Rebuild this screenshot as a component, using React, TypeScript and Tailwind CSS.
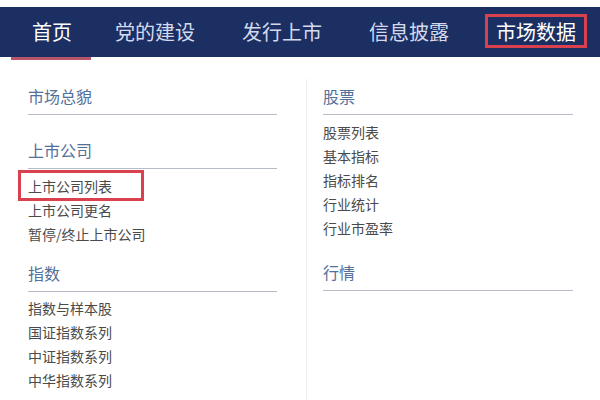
import React from "react";

const navItems = [
  { label: "首页", active: true },
  { label: "党的建设" },
  { label: "发行上市" },
  { label: "信息披露" },
  { label: "市场数据", boxed: true },
];

type Section = { title: string; items: string[]; gap: string; listTop?: string };

const leftSections: Section[] = [
  { title: "市场总貌", items: [], gap: "mb-[23px]" },
  { title: "上市公司", items: ["上市公司列表", "上市公司更名", "暂停/终止上市公司"], gap: "mb-[15px]" },
  {
    title: "指数",
    items: ["指数与样本股", "国证指数系列", "中证指数系列", "中华指数系列"],
    gap: "mb-[16px]",
    listTop: "mt-[4px]",
  },
];

const rightSections: Section[] = [
  { title: "股票", items: ["股票列表", "基本指标", "指标排名", "行业统计", "行业市盈率"], gap: "mb-[20px]" },
  { title: "行情", items: [], gap: "mb-[24px]" },
];

function MenuSection({ section }: { section: Section }) {
  return (
    <div className={section.gap}>
      <div className="text-[16px] leading-[24px] text-[#52709a] pb-[6px] border-b border-[#b5bcc8]">
        {section.title}
      </div>
      {section.items.length > 0 && (
        <ul className={section.listTop ?? "mt-[5px]"}>
          {section.items.map((item) => (
            <li key={item} className="text-[14px] leading-[24px] text-[#4a4a4a]">
              {item === "上市公司列表" ? (
                <span className="relative">
                  {item}
                  <span className="absolute left-[-10px] right-[-32px] top-[-6px] bottom-[-5px] border-[3px] border-[#d9414f]" />
                </span>
              ) : (
                item
              )}
            </li>
          ))}
        </ul>
      )}
    </div>
  );
}

export default function App() {
  return (
    <div
      className="w-[600px] h-[400px] bg-white overflow-hidden"
      style={{ fontFamily: '"Noto Sans CJK SC", "Noto Sans", sans-serif' }}
    >
      {/* top nav */}
      <div className="pt-[7px]">
        <div className="h-[50px] bg-[#1c2f62] flex items-center pl-[32px] gap-[47px]">
          {navItems.map((n) => (
            <div
              key={n.label}
              className={
                "relative text-[20px] leading-[50px] " +
                (n.active ? "mr-[-4px] " : "") +
                (n.active || n.boxed ? "text-white" : "text-[#d3daee]")
              }
            >
              {n.label}
              {n.active && (
                <span className="absolute left-[-21px] right-[-19px] bottom-[-3px] h-[3px] bg-[#b8556a]" />
              )}
              {n.boxed && (
                <span className="absolute left-[-11px] right-[-11px] top-[7px] bottom-[9px] border-[3px] border-[#d9414f]" />
              )}
            </div>
          ))}
        </div>
      </div>

      {/* dropdown panel */}
      <div className="flex pt-[22px]">
        <div className="w-[249px] ml-[28px] pt-[5px]">
          {leftSections.map((s) => (
            <MenuSection key={s.title} section={s} />
          ))}
        </div>
        <div className="ml-[29px] border-l border-[#eceef2] pl-[16px] pt-[5px] h-[330px]">
          <div className="w-[250px]">
            {rightSections.map((s) => (
              <MenuSection key={s.title} section={s} />
            ))}
          </div>
        </div>
      </div>
    </div>
  );
}
